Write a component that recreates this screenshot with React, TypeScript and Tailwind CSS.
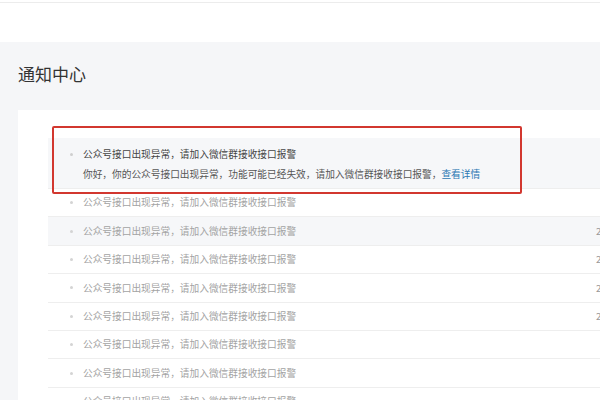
const rows = [
  { date: "" },
  { date: "2018-05-21" },
  { date: "2018-05-21" },
  { date: "2018-05-20" },
  { date: "2018-05-20" },
  { date: "" },
  { date: "" },
  { date: "" },
];

function App() {
  return (
    <div className="relative w-[600px] h-[400px] overflow-hidden bg-[#f5f6f8] font-['Noto_Sans_CJK_SC',sans-serif]">
      <div className="h-[42px] bg-white pt-[2px]">
        <div className="h-px bg-[#ececec]" />
      </div>
      <div className="h-[68px] pl-[18px] pt-[21px]">
        <h1 className="text-[17px] leading-[22px] text-[#333]">通知中心</h1>
      </div>
      <div className="ml-[18px] h-[290px] overflow-hidden bg-white pl-[30px] pt-[28px]">
        <div className="flex w-[588px] flex-col border-b border-[#eeeeee] bg-[#f6f7f9] h-[51px] pt-[6px] text-[9.7px] leading-[20px]">
          <div className="flex items-center pl-[22px] text-[#444]">
            <span className="mr-[10px] h-[3px] w-[3px] rounded-full bg-[#cfcfcf]" />
            公众号接口出现异常，请加入微信群接收接口报警
          </div>
          <div className="pl-[35px] text-[#555]">
            你好，你的公众号接口出现异常，功能可能已经失效，请加入微信群接收接口报警，
            <span className="text-[#2b78b3]">查看详情</span>
          </div>
        </div>
        {rows.map((r, i) => (
          <NoticeRow key={i} date={r.date} shaded={i === 1} />
        ))}
      </div>
      <div className="absolute left-[52px] top-[126px] h-[68px] w-[470px] rounded-[2px] border-2 border-[#d2372f]" />
    </div>
  );
}

type NoticeRowProps = {
  date: string;
  shaded: boolean;
};

function NoticeRow(props: NoticeRowProps) {
  return (
    <div
      className={
        props.shaded
          ? "flex h-[28.4px] w-[588px] items-center border-b border-[#eeeeee] bg-[#f6f7f9] text-[9.7px] text-[#a3a3a3]"
          : "flex h-[28.4px] w-[588px] items-center border-b border-[#eeeeee] text-[9.7px] text-[#a3a3a3]"
      }
    >
      <div className="flex flex-1 items-center pl-[22px]">
        <span className="mr-[10px] h-[3px] w-[3px] rounded-full bg-[#d4d4d4]" />
        公众号接口出现异常，请加入微信群接收接口报警
      </div>
      <span className="w-[40px] shrink-0 whitespace-nowrap text-[#999]">{props.date}</span>
    </div>
  );
}

export default App;
